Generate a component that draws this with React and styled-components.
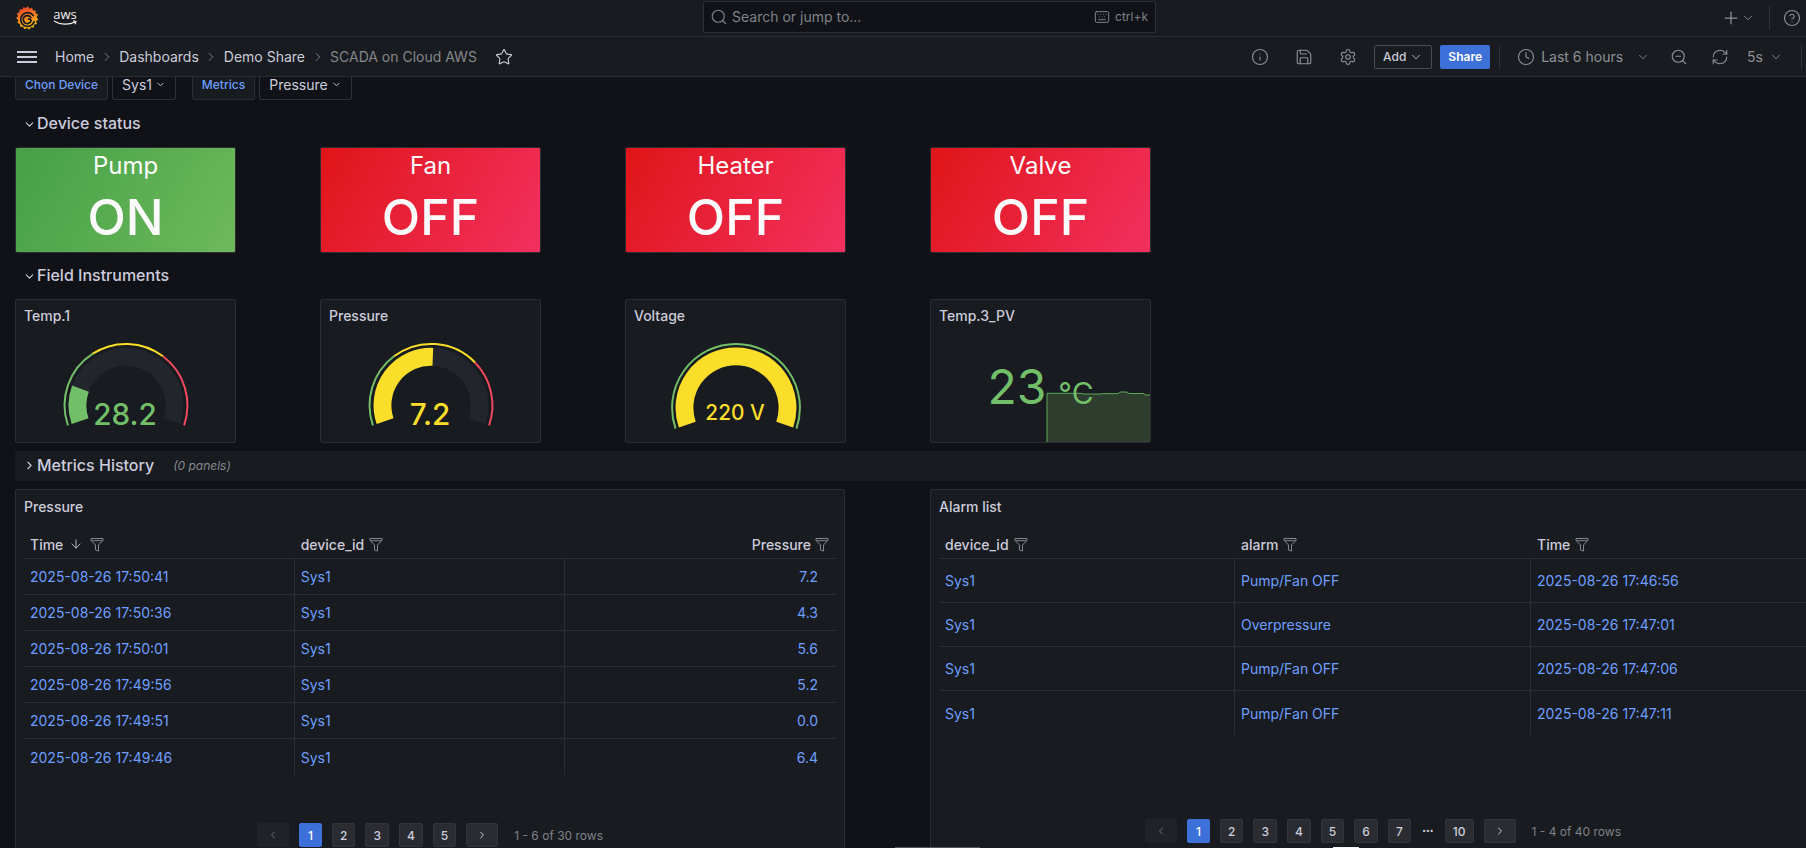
import React from "react";
import styled, { createGlobalStyle } from "styled-components";
import {
  ArrowDown,
  ChevronDown,
  ChevronLeft,
  ChevronRight,
  CircleHelp,
  Clock,
  Info,
  Keyboard,
  Plus,
  RefreshCw,
  Save,
  Search,
  Settings,
  Star,
  ZoomOut,
} from "lucide-react";

const GlobalStyle = createGlobalStyle`
  html, body {
    margin: 0;
    padding: 0;
    background: #111217;
    overflow: hidden;
  }
  * { box-sizing: border-box; }
`;

const Page = styled.div`
  position: relative;
  width: 1806px;
  height: 848px;
  overflow: hidden;
  background: #111217;
  color: #ccccdc;
  font-family: Inter, "Noto Sans", sans-serif;
  font-size: 14px;
`;

const TopBar = styled.header`
  display: flex;
  align-items: center;
  height: 37px;
  background: #181b1f;
  border-bottom: 1px solid #2a2d33;
`;

const LogoGroup = styled.div`
  display: flex;
  align-items: center;
  width: 703px;
  padding-left: 15px;
  gap: 12px;
`;

const AwsLogo = styled.div`
  display: flex;
  flex-direction: column;
  align-items: center;
  width: 26px;
  margin-top: -3px;
  color: #f2f2f2;
  font-family: "Open Sans", sans-serif;
  font-size: 13px;
  line-height: 12px;
  font-weight: 500;
`;

const SearchBox = styled.div`
  display: flex;
  align-items: center;
  width: 453px;
  height: 32px;
  padding: 0 7px 0 6px;
  gap: 4px;
  margin-top: -3px;
  background: #111217;
  border: 1px solid #2c2f35;
  border-radius: 2px;
  color: #7f8288;
`;

const Shortcut = styled.div`
  display: flex;
  align-items: center;
  gap: 5px;
  margin-left: auto;
  font-size: 12px;
`;

const TopActions = styled.div`
  display: flex;
  align-items: center;
  margin-left: auto;
  padding-right: 5px;
  color: #8e9096;
`;

const Divider = styled.span`
  display: block;
  width: 1px;
  height: ${(p) => p.$height || 24}px;
  margin-left: ${(p) => p.$left || 0}px;
  background: #2f3238;
`;

const NavBar = styled.nav`
  display: flex;
  align-items: center;
  height: 40px;
  padding-left: 17px;
  background: #181b1f;
  border-bottom: 1px solid #2a2d33;
`;

const Burger = styled.svg`
  width: 20px;
  height: 12px;
  margin-right: 18px;
`;

const Crumb = styled.span`
  color: ${(p) => (p.$current ? "#85878d" : "#ccccdc")};
`;

const CrumbArrow = styled(ChevronRight)`
  margin: 0 5.5px;
  color: #85878d;
`;

const StarIcon = styled(Star)`
  margin-left: 18px;
  color: #ccccdc;
`;

const NavActions = styled.div`
  display: flex;
  align-items: center;
  margin-left: auto;
  padding-right: 4px;
  color: #8e9096;
`;

const IconBtn = styled.span`
  display: flex;
  align-items: center;
  justify-content: center;
  width: 32px;
  height: 32px;
  margin-right: 12px;
`;

const OutlineBtn = styled.span`
  display: flex;
  align-items: center;
  justify-content: center;
  gap: 3px;
  width: 58px;
  height: 24px;
  margin-left: -2px;
  border: 1px solid #4a4d53;
  border-radius: 2px;
  color: #ccccdc;
  font-size: 12px;
  font-weight: 500;
`;

const PrimaryBtn = styled.span`
  display: flex;
  align-items: center;
  justify-content: center;
  width: 50px;
  height: 24px;
  margin-left: 8px;
  background: #3d71d9;
  border-radius: 2px;
  color: #ffffff;
  font-size: 12px;
  font-weight: 600;
`;

const Flow = styled.span`
  display: flex;
  align-items: center;
  margin-left: ${(p) => p.$left || 0}px;
`;

const Content = styled.main`
  padding-left: 15px;
`;

const VarRow = styled.div`
  display: flex;
  align-items: flex-end;
  height: 23px;
  overflow: hidden;
`;

const VarLabel = styled.span`
  display: flex;
  align-items: center;
  justify-content: center;
  flex: none;
  width: ${(p) => p.$width}px;
  height: 32px;
  margin-left: ${(p) => p.$left || 0}px;
  background: #181b1f;
  border: 1px solid #2a2d33;
  border-radius: 2px;
  color: #6e9fff;
  font-size: 12px;
  font-weight: 500;
`;

const VarValue = styled.span`
  display: flex;
  align-items: center;
  justify-content: center;
  gap: 3px;
  flex: none;
  width: ${(p) => p.$width}px;
  height: 32px;
  margin-left: 4px;
  background: #111217;
  border: 1px solid #2f3238;
  border-radius: 2px;
`;

const SectionHead = styled.div`
  display: flex;
  align-items: center;
  height: 34px;
  margin: ${(p) => p.$top ?? 6}px 0 7px;
  padding-left: 8px;
  font-size: 16px;
  font-weight: 500;
  gap: 1px;
  svg { margin-top: 2px; }
`;

const PanelGrid = styled.div`
  display: grid;
  grid-template-columns: repeat(4, 221px);
  column-gap: 84px;
`;

const StatusCard = styled.div`
  display: flex;
  flex-direction: column;
  align-items: center;
  height: 106px;
  padding-top: 2px;
  border: 1px solid #2a2d33;
  border-radius: 2px;
  color: #fbfbfb;
  background: ${(p) =>
    p.$on
      ? "linear-gradient(120deg, #45a047, #6eb95b)"
      : "linear-gradient(120deg, #e01518, #f2305f)"};
`;

const StatusName = styled.div`
  font-size: 24px;
  line-height: 32px;
`;

const StatusValue = styled.div`
  margin-top: 10px;
  font-size: 50px;
  line-height: 50px;
  font-weight: 500;
`;

const Panel = styled.section`
  height: ${(p) => p.$height}px;
  display: flex;
  flex-direction: column;
  background: #181b1f;
  border: 1px solid #2a2d33;
  border-radius: 2px;
  overflow: hidden;
`;

const PanelTitle = styled.h3`
  display: flex;
  align-items: center;
  flex: none;
  height: 34px;
  margin: 0;
  padding: 0 0 4px 8px;
  font-size: 14px;
  font-weight: 500;
  color: #ccccdc;
`;

const GaugeSvg = styled.svg`
  display: block;
  width: 219px;
  height: 109px;
  font-family: Inter, sans-serif;
  font-weight: 500;
`;

const StatBody = styled.div`
  position: relative;
  flex: 1;
  display: flex;
  justify-content: center;
  padding-top: 28px;
  color: #73bf69;
`;

const Spark = styled.svg`
  position: absolute;
  left: 0;
  top: 0;
  width: 219px;
  height: 109px;
`;

const StatNumber = styled.span`
  position: relative;
  font-size: 48px;
  line-height: 49px;
`;

const StatUnit = styled.span`
  position: relative;
  align-self: flex-start;
  margin: 13px 0 0 12px;
  font-size: 30px;
  line-height: 36px;
`;

const RowBar = styled.div`
  display: flex;
  align-items: center;
  height: 30px;
  margin: 8px 0;
  padding: 0 0 2px 8px;
  background: #181b1f;
  font-size: 16px;
  font-weight: 500;
  gap: 1px;
`;

const RowNote = styled.span`
  margin-left: 18px;
  color: #85878d;
  font-size: 12px;
  font-style: italic;
  font-weight: 400;
`;

const TableGrid = styled.div`
  display: grid;
  grid-template-columns: 830px 906px;
  column-gap: 85px;
`;

const TablePanelTitle = styled(PanelTitle)`
  height: 36px;
`;

const Table = styled.div`
  margin: 4px 8px 0;
`;

const TableHead = styled.div`
  display: grid;
  grid-template-columns: 1fr 1fr 1fr;
  height: 29px;
  align-items: center;
  border-bottom: 1px solid #2a2d33;
  font-weight: 500;
`;

const HeadCell = styled.div`
  display: flex;
  align-items: center;
  justify-content: ${(p) => (p.$right ? "flex-end" : "flex-start")};
  gap: ${(p) => (p.$right ? 4 : 5)}px;
  padding: 0 ${(p) => (p.$right ? 7 : 6)}px 0 6px;
`;

const SortArrow = styled(ArrowDown)`
  margin: 0 2px 0 1px;
`;

const TableRow = styled.div`
  display: grid;
  grid-template-columns: 1fr 1fr 1fr;
  height: ${(p) => p.$height}px;
  border-bottom: ${(p) => (p.$last ? "none" : "1px solid #2a2d33")};
`;

const Cell = styled.div`
  display: flex;
  align-items: center;
  justify-content: ${(p) => (p.$right ? "flex-end" : "flex-start")};
  padding: 0 ${(p) => (p.$right ? 18 : 6)}px 0 6px;
  color: #6e9fff;
  border-right: ${(p) => (p.$end ? "none" : "1px solid #2a2d33")};
`;

const Pager = styled.div`
  display: flex;
  align-items: center;
  justify-content: center;
  gap: 10px;
  margin-top: auto;
  margin-bottom: ${(p) => p.$bottom}px;
  font-size: 12px;
  font-weight: 500;
`;

const PageBtn = styled.span`
  display: flex;
  align-items: center;
  justify-content: center;
  height: 24px;
  padding: 0 7px;
  min-width: 23px;
  border-radius: 2px;
  color: ${(p) => (p.$active ? "#ffffff" : "#ccccdc")};
  background: ${(p) => (p.$active ? "#3d71d9" : "#2a2c31")};
  border: 1px solid ${(p) => (p.$active ? "#3d71d9" : "#33353b")};
`;

const ArrowBtn = styled(PageBtn)`
  width: 32px;
  background: ${(p) => (p.$off ? "#1f2226" : "#2a2c31")};
  border-color: ${(p) => (p.$off ? "#1f2226" : "#33353b")};
  color: ${(p) => (p.$off ? "#6d6f75" : "#ccccdc")};
`;

const Ellipsis = styled.span`
  width: 14px;
  text-align: center;
  font-size: 7px;
  line-height: 12px;
`;

const PagerText = styled.span`
  margin-left: 6px;
  color: #7f8288;
  font-weight: 400;
`;

const ScrollMark = styled.span`
  position: absolute;
  bottom: 0;
  left: ${(p) => p.$left}px;
  width: ${(p) => p.$width}px;
  height: 1px;
  background: ${(p) => p.$color};
`;

const GRAFANA_BLOB =
  "M17 1.5l2.8 3.6 3.7-1.5 1 4 4-.1-.4 4 3.6 1.8-2 3.5 2.4 3.2-3.2 2.4 1.1 3.9-3.9.9-.5 4-4-.5-2.1 3.3-3.3-2.2-3.5 1.9-1.8-3.6-4 .1-.2-4-3.7-1.4 1.3-3.8-3-2.6 2.5-3.1-1.6-3.7 3.7-1.6v-4l4 .2 1.7-3.6 3.4 1.9z";

const GrafanaLogo = () => (
  <svg width="25" height="26" viewBox="0 0 34 36">
    <defs>
      <linearGradient id="grafanaFill" x1="0.3" y1="0" x2="0.6" y2="1">
        <stop offset="0" stopColor="#ef3d2c" />
        <stop offset="0.5" stopColor="#f5861f" />
        <stop offset="1" stopColor="#fbca0a" />
      </linearGradient>
    </defs>
    <path d={GRAFANA_BLOB} fill="url(#grafanaFill)" />
    <path
      d="M25 14.5a9.6 9.6 0 1 0 1.3 8.5M21.6 17.5a5.6 5.6 0 1 0 .4 4.4 3 3 0 0 0-3.6-2.4"
      fill="none"
      stroke="#181b1f"
      strokeWidth="2.4"
      strokeLinecap="round"
    />
  </svg>
);

const FilterIcon = () => (
  <svg width="14" height="15" viewBox="0 0 14 15" fill="none" stroke="#85878d" strokeWidth="1">
    <path d="M1 1.5h12v1.8L8.5 8v6l-3-1V8L1 3.3z" />
    <path d="M1.5 3.7h11" />
  </svg>
);

// arc sweep of the gauge, degrees either side of straight up
const SWEEP = 109;

const arc = (cx, cy, r, from, to) => {
  const point = (t) => {
    const a = ((-SWEEP + t * SWEEP * 2) * Math.PI) / 180;
    return [cx + r * Math.sin(a), cy - r * Math.cos(a)];
  };
  const [x1, y1] = point(from);
  const [x2, y2] = point(to);
  const large = (to - from) * SWEEP * 2 > 180 ? 1 : 0;
  return `M${x1.toFixed(2)} ${y1.toFixed(2)}A${r} ${r} 0 ${large} 1 ${x2.toFixed(2)} ${y2.toFixed(2)}`;
};

const GREEN = "#73bf69";
const YELLOW = "#fade2a";
const RED = "#f2495c";

const Gauge = ({ cy, rim, bar, width, value, fill, color, size, baseline, bands }) => (
  <GaugeSvg viewBox="0 0 219 109">
    {bands.map(([from, to, c]) => (
      <path key={from} d={arc(110, cy, rim, from, to)} fill="none" stroke={c} strokeWidth="2" />
    ))}
    <path d={arc(110, cy, bar, 0, 1)} fill="none" stroke="#22252b" strokeWidth={width} />
    <path d={arc(110, cy, bar, 0, fill)} fill="none" stroke={color} strokeWidth={width} />
    <text x="109" y={baseline} textAnchor="middle" fontSize={size} fill={color}>
      {value}
    </text>
  </GaugeSvg>
);

const Icon = ({ as: Glyph, size = 18 }) => <Glyph size={size} strokeWidth={1.5} />;

const statuses = [
  { name: "Pump", value: "ON", on: true },
  { name: "Fan", value: "OFF" },
  { name: "Heater", value: "OFF" },
  { name: "Valve", value: "OFF" },
];

const gauges = [
  {
    title: "Temp.1",
    cy: 72,
    rim: 62,
    bar: 49,
    width: 18,
    value: "28.2",
    fill: 0.18,
    color: GREEN,
    size: 30,
    baseline: 92,
    bands: [
      [0, 0.35, GREEN],
      [0.35, 0.67, YELLOW],
      [0.67, 1, RED],
    ],
  },
  {
    title: "Pressure",
    cy: 72,
    rim: 62,
    bar: 49,
    width: 18,
    value: "7.2",
    fill: 0.51,
    color: YELLOW,
    size: 30,
    baseline: 92,
    bands: [
      [0, 0.33, GREEN],
      [0.33, 0.71, YELLOW],
      [0.71, 1, RED],
    ],
  },
  {
    title: "Voltage",
    cy: 74.5,
    rim: 64.5,
    bar: 52,
    width: 18,
    value: "220 V",
    fill: 1,
    color: YELLOW,
    size: 21,
    baseline: 87,
    bands: [[0, 1, GREEN]],
  },
];

const pressureRows = [
  ["2025-08-26 17:50:41", "Sys1", "7.2"],
  ["2025-08-26 17:50:36", "Sys1", "4.3"],
  ["2025-08-26 17:50:01", "Sys1", "5.6"],
  ["2025-08-26 17:49:56", "Sys1", "5.2"],
  ["2025-08-26 17:49:51", "Sys1", "0.0"],
  ["2025-08-26 17:49:46", "Sys1", "6.4"],
];

const alarmRows = [
  ["Sys1", "Pump/Fan OFF", "2025-08-26 17:46:56"],
  ["Sys1", "Overpressure", "2025-08-26 17:47:01"],
  ["Sys1", "Pump/Fan OFF", "2025-08-26 17:47:06"],
  ["Sys1", "Pump/Fan OFF", "2025-08-26 17:47:11"],
];

const Pagination = ({ pages, note, bottom }) => (
  <Pager $bottom={bottom}>
    <ArrowBtn $off>
      <ChevronLeft size={12} />
    </ArrowBtn>
    {pages.map((p) =>
      p === "..." ? (
        <Ellipsis key={p}>•••</Ellipsis>
      ) : (
        <PageBtn key={p} $active={p === "1"}>
          {p}
        </PageBtn>
      )
    )}
    <ArrowBtn>
      <ChevronRight size={12} />
    </ArrowBtn>
    <PagerText>{note}</PagerText>
  </Pager>
);

const App = () => (
  <Page>
    <GlobalStyle />
    <TopBar>
      <LogoGroup>
        <GrafanaLogo />
        <AwsLogo>
          aws
          <svg width="25" height="6" viewBox="0 0 25 6" fill="none" stroke="#f2f2f2" strokeWidth="1.1">
            <path d="M1 1c6 4 15 4 21 1M20 .8l3 .6-1 2.8" />
          </svg>
        </AwsLogo>
      </LogoGroup>
      <SearchBox>
        <Icon as={Search} />
        <span>Search or jump to...</span>
        <Shortcut>
          <Icon as={Keyboard} size={16} />
          ctrl+k
        </Shortcut>
      </SearchBox>
      <TopActions>
        <Plus size={20} strokeWidth={1.5} />
        <ChevronDown size={14} strokeWidth={1.5} />
        <Divider $left={14} />
        <Flow $left={13}>
          <CircleHelp size={18} strokeWidth={1.5} />
        </Flow>
      </TopActions>
    </TopBar>

    <NavBar>
      <Burger viewBox="0 0 20 12" fill="none" stroke="#ccccdc" strokeWidth="1.8">
        <path d="M0 1h20M0 6h20M0 11h20" />
      </Burger>
      <Crumb>Home</Crumb>
      <CrumbArrow size={14} strokeWidth={1.5} />
      <Crumb>Dashboards</Crumb>
      <CrumbArrow size={14} strokeWidth={1.5} />
      <Crumb>Demo Share</Crumb>
      <CrumbArrow size={14} strokeWidth={1.5} />
      <Crumb $current>SCADA on Cloud AWS</Crumb>
      <StarIcon size={18} strokeWidth={1.5} />
      <NavActions>
        <IconBtn>
          <Icon as={Info} />
        </IconBtn>
        <IconBtn>
          <Icon as={Save} />
        </IconBtn>
        <IconBtn>
          <Icon as={Settings} />
        </IconBtn>
        <OutlineBtn>
          Add
          <ChevronDown size={14} strokeWidth={1.5} />
        </OutlineBtn>
        <PrimaryBtn>Share</PrimaryBtn>
        <Divider $left={9} />
        <Flow $left={17}>
          <Icon as={Clock} />
        </Flow>
        <Flow $left={6}>Last 6 hours</Flow>
        <Flow $left={13}>
          <ChevronDown size={14} strokeWidth={1.5} />
        </Flow>
        <Flow $left={20}>
          <Icon as={ZoomOut} />
        </Flow>
        <Flow $left={23}>
          <Icon as={RefreshCw} />
        </Flow>
        <Flow $left={18}>5s</Flow>
        <Flow $left={6}>
          <ChevronDown size={14} strokeWidth={1.5} />
        </Flow>
        <Divider $left={18} />
      </NavActions>
    </NavBar>

    <Content>
      <VarRow>
        <VarLabel $width={93}>Chọn Device</VarLabel>
        <VarValue $width={64}>
          Sys1
          <ChevronDown size={11} strokeWidth={2} />
        </VarValue>
        <VarLabel $width={63} $left={16}>
          Metrics
        </VarLabel>
        <VarValue $width={93}>
          Pressure
          <ChevronDown size={11} strokeWidth={2} />
        </VarValue>
      </VarRow>

      <SectionHead>
        <ChevronDown size={13} strokeWidth={2} />
        Device status
      </SectionHead>
      <PanelGrid>
        {statuses.map((s) => (
          <StatusCard key={s.name} $on={s.on}>
            <StatusName>{s.name}</StatusName>
            <StatusValue>{s.value}</StatusValue>
          </StatusCard>
        ))}
      </PanelGrid>

      <SectionHead $top={5}>
        <ChevronDown size={13} strokeWidth={2} />
        Field Instruments
      </SectionHead>
      <PanelGrid>
        {gauges.map(({ title, ...g }) => (
          <Panel key={title} $height={144}>
            <PanelTitle>{title}</PanelTitle>
            <Gauge {...g} />
          </Panel>
        ))}
        <Panel $height={144}>
          <PanelTitle>Temp.3_PV</PanelTitle>
          <StatBody>
            <Spark viewBox="0 0 219 109">
              <path
                d="M116 108V59.3H150L152 60H170L172 59.6H187L189 58H196L198 59.5H213L214 61H219V109H116Z"
                fill="#2e3d2e"
              />
              <path
                d="M0 108.5H116V59.3H150L152 60H170L172 59.6H187L189 58H196L198 59.5H213L214 61H219"
                fill="none"
                stroke="#5da858"
                strokeWidth="1"
              />
            </Spark>
            <StatNumber>23</StatNumber>
            <StatUnit>°C</StatUnit>
          </StatBody>
        </Panel>
      </PanelGrid>

      <RowBar>
        <ChevronRight size={13} strokeWidth={2} />
        Metrics History
        <RowNote>(0 panels)</RowNote>
      </RowBar>

      <TableGrid>
        <Panel $height={370}>
          <TablePanelTitle>Pressure</TablePanelTitle>
          <Table>
            <TableHead>
              <HeadCell>
                Time
                <SortArrow size={14} strokeWidth={1.5} />
                <FilterIcon />
              </HeadCell>
              <HeadCell>
                device_id
                <FilterIcon />
              </HeadCell>
              <HeadCell $right>
                Pressure
                <FilterIcon />
              </HeadCell>
            </TableHead>
            {pressureRows.map((r, i) => (
              <TableRow key={r[0]} $height={36} $last={i === pressureRows.length - 1}>
                <Cell>{r[0]}</Cell>
                <Cell>{r[1]}</Cell>
                <Cell $right $end>
                  {r[2]}
                </Cell>
              </TableRow>
            ))}
          </Table>
          <Pagination pages={["1", "2", "3", "4", "5"]} note="1 - 6 of 30 rows" bottom={11} />
        </Panel>

        <Panel $height={370}>
          <TablePanelTitle>Alarm list</TablePanelTitle>
          <Table>
            <TableHead>
              <HeadCell>
                device_id
                <FilterIcon />
              </HeadCell>
              <HeadCell>
                alarm
                <FilterIcon />
              </HeadCell>
              <HeadCell>
                Time
                <FilterIcon />
              </HeadCell>
            </TableHead>
            {alarmRows.map((r, i) => (
              <TableRow key={r[2]} $height={44} $last={i === alarmRows.length - 1}>
                <Cell>{r[0]}</Cell>
                <Cell>{r[1]}</Cell>
                <Cell $end>{r[2]}</Cell>
              </TableRow>
            ))}
          </Table>
          <Pagination
            pages={["1", "2", "3", "4", "5", "6", "7", "...", "10"]}
            note="1 - 4 of 40 rows"
            bottom={15}
          />
        </Panel>
      </TableGrid>
    </Content>
    <ScrollMark $left={895} $width={85} $color="#55575c" />
    <ScrollMark $left={1333} $width={26} $color="#f4f4f4" />
  </Page>
);

export default App;
